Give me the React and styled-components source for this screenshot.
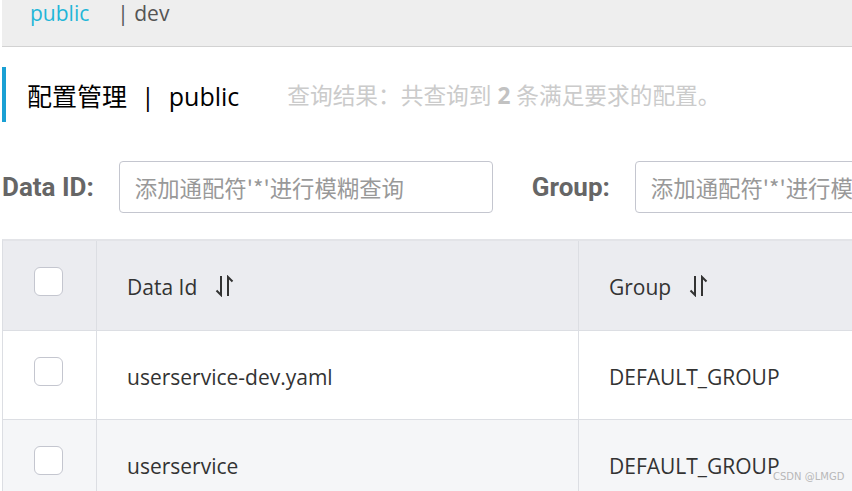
import React from 'react'
import styled, { createGlobalStyle } from 'styled-components'

const GlobalStyle = createGlobalStyle`
body {
  margin: 0;
  background: #fff;
  font-family: 'Open Sans', 'Noto Sans CJK SC', sans-serif;
  overflow: hidden;
}
`

const Page = styled.div`
width: 852px;
height: 491px;
padding-left: 2px;
box-sizing: border-box;
overflow: hidden;
`

const NamespaceBar = styled.div`
height: 47px;
background: #eeeeee;
border-bottom: 1px solid #d2d2d2;
display: flex;
align-items: flex-start;
padding: 1px 0 0 28px;
box-sizing: border-box;
font-size: 21px;
line-height: 24px;
`

const Namespace = styled.span`
color: ${props => (props.active ? '#1fb6d8' : '#555')};
margin-right: ${props => (props.active ? '28px' : '0')};
`

const TitleRow = styled.div`
margin-top: 20px;
height: 55px;
border-left: 4px solid #1aa0d4;
display: flex;
align-items: center;
padding-left: 21px;
`

const Title = styled.h1`
margin: 0;
font-size: 25px;
font-weight: 400;
color: #000;
font-family: 'Open Sans', 'Noto Sans CJK SC', sans-serif;
`

const Sep = styled.span`
margin: 0 14px;
`

const Summary = styled.span`
margin-left: 48px;
font-size: 22.7px;
color: #cbcbcb;
b {
  color: #c2c2c2;
}
`

const Filters = styled.div`
margin-top: 39px;
display: flex;
align-items: center;
`

const Label = styled.label`
font-family: 'Roboto', sans-serif;
font-weight: 700;
font-size: 26px;
color: #666;
margin-right: 25px;
white-space: nowrap;
flex-shrink: 0;
`

const SearchInput = styled.input`
width: 374px;
height: 52px;
box-sizing: border-box;
border: 1px solid #c4c6cf;
border-radius: 4px;
padding: 0 15px;
font-size: 22.4px;
font-family: 'Noto Sans CJK SC', sans-serif;
margin-right: 39px;
flex-shrink: 0;
&::placeholder {
  color: #999;
}
`

const Table = styled.div`
margin-top: 26px;
border-top: 2px solid #e3e4e8;
border-left: 1px solid #dcdee3;
display: grid;
grid-template-columns: 94px 482px 1fr;
`

const Cell = styled.div`
height: ${props => (props.head ? '90px' : '89px')};
box-sizing: border-box;
background: ${props => (props.head ? '#ebecf0' : props.alt ? '#f5f6f8' : '#fff')};
border-bottom: 1px solid #dcdee3;
border-right: ${props => (props.last ? 'none' : '1px solid #dcdee3')};
display: flex;
align-items: center;
justify-content: ${props => (props.center ? 'center' : 'flex-start')};
padding-left: ${props => (props.center ? '0' : '30px')};
padding-top: ${props => (props.center ? '0' : '3px')};
font-size: 21px;
color: #333;
white-space: nowrap;
`

const Check = styled.span`
width: 29px;
height: 29px;
box-sizing: border-box;
border: 1px solid #c4c6cf;
border-radius: 6px;
background: #fff;
margin-left: -3px;
margin-top: -8px;
`

const SortIcon = () => (
  <svg width="22" height="22" viewBox="0 0 22 22" style={{ marginLeft: 16, marginTop: -3 }}>
    <path d="M8 1 V20 L3.5 15.5" fill="none" stroke="#333" strokeWidth="2" />
    <path d="M15 21 V2 L19.5 6.5" fill="none" stroke="#333" strokeWidth="2" />
  </svg>
)

const Watermark = styled.div`
position: absolute;
left: 773px;
top: 471px;
font-family: 'DejaVu Sans', sans-serif;
font-size: 10px;
color: #b8b8b8;
`

const rows = [
  { id: 'userservice-dev.yaml', group: 'DEFAULT_GROUP' },
  { id: 'userservice', group: 'DEFAULT_GROUP' },
]

const App = () => {
  return (
    <Page>
      <GlobalStyle />
      <NamespaceBar>
        <Namespace active>public</Namespace>
        <Namespace>| dev</Namespace>
      </NamespaceBar>
      <TitleRow>
        <Title>配置管理<Sep>|</Sep>public</Title>
        <Summary>查询结果：共查询到 <b>2</b> 条满足要求的配置。</Summary>
      </TitleRow>
      <Filters>
        <Label>Data ID:</Label>
        <SearchInput placeholder="添加通配符'*'进行模糊查询" />
        <Label>Group:</Label>
        <SearchInput placeholder="添加通配符'*'进行模糊查询" />
      </Filters>
      <Table>
        <Cell head center><Check /></Cell>
        <Cell head>Data Id<SortIcon /></Cell>
        <Cell head last>Group<SortIcon /></Cell>
        {rows.map((r, i) => (
          <React.Fragment key={r.id}>
            <Cell center alt={i % 2 === 1}><Check /></Cell>
            <Cell alt={i % 2 === 1}>{r.id}</Cell>
            <Cell alt={i % 2 === 1} last>{r.group}</Cell>
          </React.Fragment>
        ))}
      </Table>
      <Watermark>CSDN @LMGD</Watermark>
    </Page>
  )
}

export default App
